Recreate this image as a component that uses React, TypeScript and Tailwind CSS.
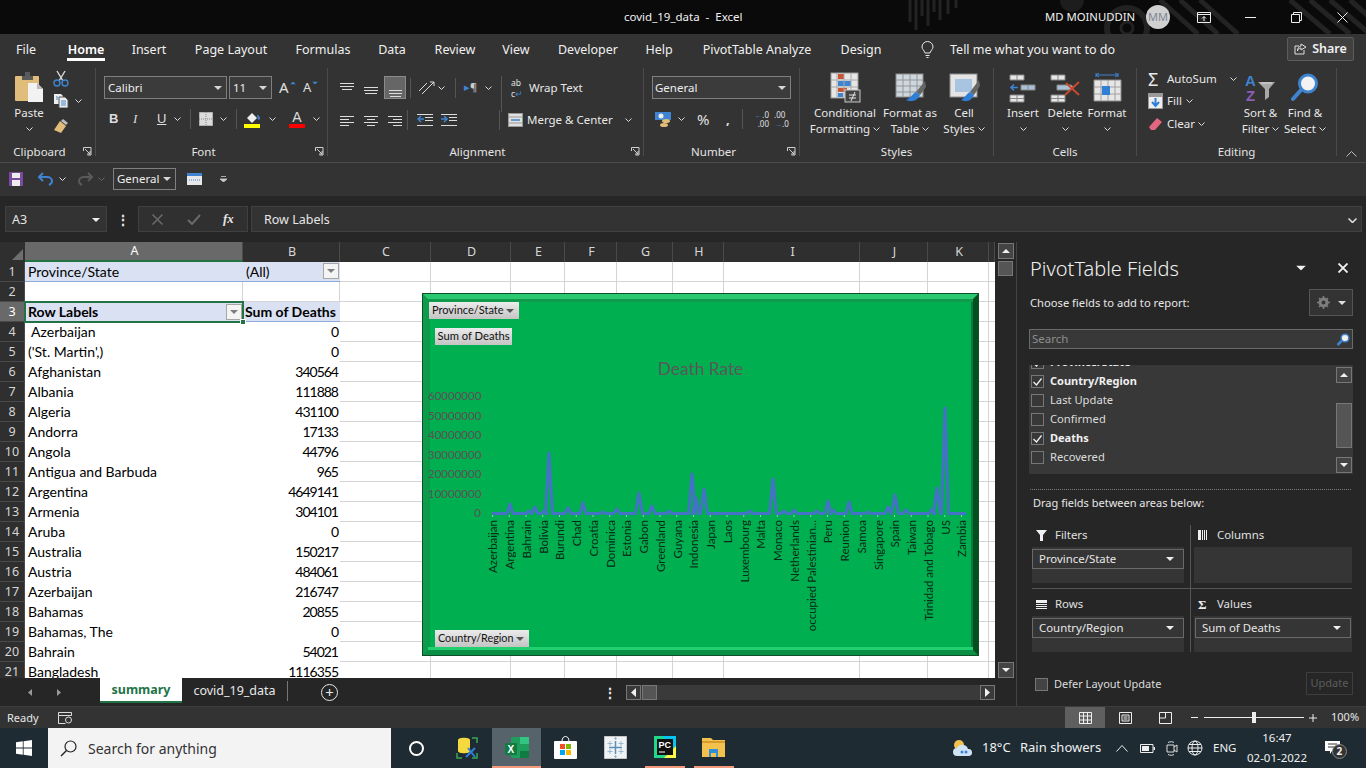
import type { ReactElement, ReactNode } from "react";

type Row = [string, string];

const rows: Row[] = [
  ["\u00a0Azerbaijan", "0"],
  ["('St. Martin',)", "0"],
  ["Afghanistan", "340564"],
  ["Albania", "111888"],
  ["Algeria", "431100"],
  ["Andorra", "17133"],
  ["Angola", "44796"],
  ["Antigua and Barbuda", "965"],
  ["Argentina", "4649141"],
  ["Armenia", "304101"],
  ["Aruba", "0"],
  ["Australia", "150217"],
  ["Austria", "484061"],
  ["Azerbaijan", "216747"],
  ["Bahamas", "20855"],
  ["Bahamas, The", "0"],
  ["Bahrain", "54021"],
  ["Bangladesh", "1116355"],
];

const countries = [
  "Azerbaijan", "Argentina", "Bahrain", "Bolivia", "Burundi", "Chad", "Croatia", "Dominica", "Estonia", "Gabon",
  "Greenland", "Guyana", "Indonesia", "Japan", "Laos", "Luxembourg", "Malta", "Monaco", "Netherlands",
  "occupied Palestinian...", "Peru", "Reunion", "Samoa", "Singapore", "Spain", "Taiwan", "Trinidad and Tobago", "US", "Zambia",
];

const axis = ["60000000", "50000000", "40000000", "30000000", "20000000", "10000000", "0"];

const peaks: [number, number][] = [
  [509, 503], [528, 510], [534, 506], [543, 510], [548, 452], [567, 507], [582, 502], [602, 511], [616, 508],
  [638, 492], [651, 505], [668, 510], [691, 473], [695, 497], [703, 488], [749, 510], [772, 478], [783, 510],
  [793, 509], [816, 510], [827, 500], [832, 509], [848, 501], [867, 511], [887, 506], [894, 494], [905, 509],
  [931, 508], [936, 487], [944, 407],
];

const base = 512.5;
const linePoints = [
  `491,${base}`,
  ...peaks.map(([x, y]) => {
    const half = y < 500 ? 3.5 : 3;
    return `${x - half},${base} ${x},${y} ${x + half},${base}`;
  }),
  `965,${base}`,
].join(" ");

function Chev({ className = "" }: { className?: string }): ReactElement {
  return (
    <svg width="7" height="4" viewBox="0 0 7 4" className={`shrink-0 ${className}`}>
      <path d="M.5.5l3 3 3-3" fill="none" stroke="#dcdcdc" />
    </svg>
  );
}

function Caret({ className = "", color = "#d6d6d6" }: { className?: string; color?: string }): ReactElement {
  return (
    <svg width="8" height="4" viewBox="0 0 8 4" className={`shrink-0 ${className}`}>
      <path d="M0 0h8L4 4z" fill={color} />
    </svg>
  );
}

function Launcher(): ReactElement {
  return (
    <svg width="9" height="9" viewBox="0 0 9 9" className="absolute bottom-[0px] right-[3px]">
      <path d="M.5 4V.5h7.500V8H4.500M2 2l5 5M7 4v3H4" fill="none" stroke="#cfcfcf" />
    </svg>
  );
}

function Group({ label, width, launcher, children }: { label: string; width: string; launcher?: boolean; children: ReactNode }): ReactElement {
  return (
    <div className={`flex h-[88px] shrink-0 flex-col border-r border-[#4b4b4b] ${width}`}>
      <div className="h-[78px]">{children}</div>
      <div className={`relative h-[10px] text-center text-[11.500px] leading-[16px] text-[#e4e4e4] ${launcher ? "pr-[16px]" : ""}`}>
        <div className="-mt-[2px]">{label}</div>
        {launcher ? <Launcher /> : null}
      </div>
    </div>
  );
}

function Big({ width, icon, one, two }: { width: string; icon: ReactNode; one: string; two?: string }): ReactElement {
  return (
    <div className={`flex shrink-0 flex-col items-center text-[11.500px] leading-[16px] text-[#e8e8e8] ${width}`}>
      <div className="flex h-[33px] items-center">{icon}</div>
      <div className="mt-[1px] whitespace-nowrap">{one}</div>
      <div className="flex h-[16px] items-center gap-[3px] whitespace-nowrap">
        {two}
        <Chev />
      </div>
    </div>
  );
}

function IconConditional(): ReactElement {
  return (
    <svg width="31" height="31" viewBox="0 0 31 31">
      <rect x="1" y="1" width="27" height="25" fill="#e6e6e6" stroke="#9a9a9a" />
      <rect x="8" y="2" width="6" height="5" fill="#c8552f" />
      <rect x="8" y="9" width="13" height="5" fill="#3f84d1" />
      <rect x="8" y="16" width="9" height="4" fill="#c8552f" />
      <rect x="8" y="21" width="5" height="4" fill="#3f84d1" />
      <path d="M7 1v25M14 1v25M21 1v25M1 8h27M1 15h27" stroke="#a8a8a8" />
      <rect x="15" y="18" width="15" height="12" fill="#444" stroke="#c8c8c8" />
      <path d="M19 23h7M19 26h7M25 20l-4 9" stroke="#e8e8e8" fill="none" />
    </svg>
  );
}

function IconFormatTable(): ReactElement {
  return (
    <svg width="31" height="31" viewBox="0 0 31 31">
      <rect x="1" y="2" width="27" height="23" fill="#cfd6dc" stroke="#8c8c8c" />
      <path d="M1 8h27M1 14h27M1 20h27M8 2v23M15 2v23M22 2v23" stroke="#8f979d" />
      <path d="M30 9l-9 11 4 3 6-8z" fill="#666" />
      <path d="M21 20c-4 2-5 6-10 8 4 2 11 2 14-5z" fill="#2f7fd6" />
    </svg>
  );
}

function IconCellStyles(): ReactElement {
  return (
    <svg width="31" height="31" viewBox="0 0 31 31">
      <rect x="1" y="2" width="27" height="23" fill="#e4e4e4" stroke="#8c8c8c" />
      <rect x="6" y="7" width="17" height="13" fill="#a9c4e0" />
      <path d="M30 8l-9 12 4 3 6-9z" fill="#666" />
      <path d="M21 20c-4 2-5 6-9 8 4 2 10 2 13-5z" fill="#2f7fd6" />
    </svg>
  );
}

function IconInsert(): ReactElement {
  return (
    <svg width="28" height="30" viewBox="0 0 28 30">
      <path d="M1 2h14v5H1zM1 22h14v7H1z" fill="#e6e6e6" stroke="#888" />
      <path d="M8 2v5M8 22v7M1 25.500h14" stroke="#888" />
      <path d="M12 12h14v5H12z" fill="#a9c0d8" stroke="#888" />
      <path d="M19 12v5" stroke="#888" />
      <path d="M9 14.500H2m3-3-3 3 3 3" stroke="#3f84d1" strokeWidth="1.600" fill="none" />
    </svg>
  );
}

function IconDelete(): ReactElement {
  return (
    <svg width="31" height="30" viewBox="0 0 31 30">
      <path d="M1 2h14v5H1zM1 22h14v7H1z" fill="#e6e6e6" stroke="#888" />
      <path d="M8 2v5M8 22v7M1 25.500h14" stroke="#888" />
      <path d="M7 12h14l3 2.500-3 2.500H7z" fill="#a9c0d8" stroke="#888" />
      <path d="M15 22L29 9M16 10l13 12" stroke="#c8492b" strokeWidth="2" />
    </svg>
  );
}

function IconFormat(): ReactElement {
  return (
    <svg width="30" height="32" viewBox="0 0 30 32">
      <path d="M4 3h22M4 1v4M26 1v4M7 1L4 3l3 2M23 1l3 2-3 2" stroke="#3f84d1" fill="none" />
      <path d="M2 8h27v21H2z" fill="#e6e6e6" stroke="#8c8c8c" />
      <path d="M9 8v21M16 8v21M23 8v21M2 15h27M2 22h27" stroke="#a0a0a0" />
      <rect x="10" y="14" width="8" height="9" fill="#2f7fd6" />
    </svg>
  );
}

function IconSort(): ReactElement {
  return (
    <svg width="31" height="30" viewBox="0 0 31 30">
      <text x="0" y="13" fontSize="15" fontWeight="700" fill="#3f84d1" fontFamily="'Liberation Sans',sans-serif">A</text>
      <text x="1" y="28" fontSize="15" fontWeight="700" fill="#8a5fb5" fontFamily="'Liberation Sans',sans-serif">Z</text>
      <path d="M13 9h17l-6 7v8l-4 3V16z" fill="#a8a8a8" />
      <path d="M16 10h11" stroke="#dcdcdc" />
    </svg>
  );
}

function IconFind(): ReactElement {
  return (
    <svg width="28" height="29" viewBox="0 0 28 29">
      <circle cx="17" cy="10.500" r="8.500" fill="#f3f3f3" stroke="#3f84d1" strokeWidth="3" />
      <path d="M10 17L2 26" stroke="#3f84d1" strokeWidth="4" strokeLinecap="round" />
    </svg>
  );
}

function AlignIcon({ lines }: { lines: string }): ReactElement {
  return (
    <svg width="15" height="11" viewBox="0 0 15 11" className="shrink-0">
      <path d={lines} stroke="#dcdcdc" fill="none" />
    </svg>
  );
}

function Ribbon(): ReactElement {
  return (
    <div className="flex h-[96px] pt-[2px]">
      <Group label="Clipboard" width="w-[96px]" launcher>
        <div className="flex">
          <div className="ml-[10px] flex w-[38px] flex-col items-center text-[11.500px] leading-[16px] text-[#e8e8e8]">
            <svg width="31" height="32" viewBox="0 0 31 32" className="mt-[3px]">
              <rect x="1" y="5" width="24" height="25" fill="#e0bd7a" rx="1" />
              <path d="M8 5h3V1h5v4h3v4H8z" fill="#5a5a5a" />
              <path d="M14 12h9l6 6v13H14z" fill="#f2f2f2" />
              <path d="M23 12v6h6" fill="#bbb" />
            </svg>
            <div className="mt-[2px]">Paste</div>
            <Chev className="mt-[6px]" />
          </div>
          <div className="ml-[5px] flex flex-col">
            <svg width="16" height="17" viewBox="0 0 16 17" className="mt-[2px]">
              <path d="M4 1l6 10M12 1L6 11" stroke="#dcdcdc" strokeWidth="1.400" />
              <circle cx="4" cy="13" r="3" fill="none" stroke="#3f84d1" strokeWidth="1.400" />
              <circle cx="12" cy="13" r="3" fill="none" stroke="#3f84d1" strokeWidth="1.400" />
            </svg>
            <div className="mt-[6px] flex items-center gap-[6px]">
              <svg width="16" height="15" viewBox="0 0 16 15">
                <path d="M1 1h7l2 2v8H1z" fill="#eee" />
                <path d="M6 4h6l3 3v8H6z" fill="#eee" stroke="#555" />
                <path d="M8 8h5M8 10h5M8 12h5M3 4h2M3 6h2" stroke="#3f84d1" />
              </svg>
              <Chev />
            </div>
            <svg width="17" height="15" viewBox="0 0 17 15" className="mt-[10px]">
              <path d="M10 1l5 4-2 2-5-4z" fill="#bdbdbd" />
              <path d="M7 3l6 5-5 7-7-3z" fill="#e0bd7a" />
            </svg>
          </div>
        </div>
      </Group>

      <Group label="Font" width="w-[232px]" launcher>
        <div className="flex pl-[8px] pt-[8px]">
          <div className="flex h-[23px] w-[123px] items-center justify-between border border-[#7f7f7f] bg-[#3b3b3b] pl-[3px] pr-[4px] text-[11.500px] text-[#eee]">
            Calibri
            <Caret />
          </div>
          <div className="ml-[2px] flex h-[23px] w-[43px] items-center justify-between border border-[#7f7f7f] bg-[#3b3b3b] pl-[3px] pr-[4px] text-[11.500px] text-[#eee]">
            11
            <Caret />
          </div>
          <div className="ml-[7px] flex h-[23px] w-[24px] items-center text-[15px] text-[#e0e0e0]">
            A<Caret className="mb-[10px] scale-75 rotate-180" color="#3f84d1" />
          </div>
          <div className="flex h-[23px] w-[24px] items-center text-[13px] text-[#e0e0e0]">
            A<Caret className="mb-[10px] scale-75" color="#3f84d1" />
          </div>
        </div>
        <div className="mt-[9px] flex h-[22px] items-center pl-[13px] text-[13px] text-[#dcdcdc]">
          <span className="w-[24px] font-['Liberation_Sans'] font-bold">B</span>
          <span className="w-[24px] font-['Liberation_Serif'] italic">I</span>
          <span className="w-[15px] font-['Liberation_Sans'] underline">U</span>
          <Chev className="ml-[2px]" />
          <div className="ml-[9px] mr-[8px] h-[20px] w-px bg-[#555]" />
          <svg width="14" height="14" viewBox="0 0 14 14">
            <rect x=".5" y=".5" width="13" height="13" fill="#dcdcdc" stroke="#dcdcdc" strokeDasharray="1 1" />
            <path d="M7 0v14M0 7h14" stroke="#888" strokeDasharray="1 1" />
          </svg>
          <Chev className="ml-[7px]" />
          <div className="ml-[9px] mr-[7px] h-[20px] w-px bg-[#555]" />
          <svg width="17" height="17" viewBox="0 0 17 17">
            <path d="M3 7l5-5 5 5-5 5z" fill="#eee" />
            <path d="M13 4c2 0 3 2 3 4l-2 1z" fill="#3f84d1" />
            <rect y="13" width="16" height="4" fill="#ffff00" />
          </svg>
          <Chev className="ml-[8px]" />
          <div className="ml-[13px] flex h-[17px] w-[16px] flex-col items-center">
            <span className="h-[13px] font-['Liberation_Sans'] text-[14px] leading-[13px] text-[#dcdcdc]">A</span>
            <span className="h-[4px] w-[16px] bg-[#ff0000]" />
          </div>
          <Chev className="ml-[8px]" />
        </div>
      </Group>

      <Group label="Alignment" width="w-[316px]" launcher>
        <div className="mt-[8px] flex h-[23px] items-center pl-[12px]">
          <AlignIcon lines="M0 1.500h14M0 4.500h14M2 7.500h10" />
          <div className="ml-[9px] mt-[5px]">
            <AlignIcon lines="M0 2.500h14M0 5.500h14M1 8.500h12" />
          </div>
          <div className="ml-[5px] flex h-[23px] w-[22px] items-end justify-center border border-[#8a8a8a] bg-[#666] pb-[1px]">
            <AlignIcon lines="M1 4.500h13M1 7.500h13M2 10.500h11" />
          </div>
          <div className="ml-[4px] mr-[7px] h-[20px] w-px bg-[#555]" />
          <svg width="17" height="15" viewBox="0 0 17 15">
            <path d="M1 11L9 3M4 14l9-9M12 2h4v4M16 2l-6 6" stroke="#dcdcdc" fill="none" />
          </svg>
          <Chev className="ml-[3px]" />
          <div className="ml-[10px] mr-[8px] h-[20px] w-px bg-[#555]" />
          <span className="w-[13px] whitespace-nowrap text-[11px] text-[#ccc]">
            <span className="text-[#3f84d1]">▸</span>¶
          </span>
          <Chev className="ml-[8px]" />
          <div className="ml-[9px] mr-[9px] h-[36px] w-px self-start bg-[#555]" />
          <span className="w-[14px] whitespace-nowrap text-[8.500px] leading-[11px] text-[#e4e4e4]">
            ab
            <br />c<span className="text-[#3f84d1]">↵</span>
          </span>
          <span className="ml-[4px] text-[11.500px] text-[#e8e8e8]">Wrap Text</span>
        </div>
        <div className="mt-[10px] flex h-[22px] items-center pl-[12px]">
          <AlignIcon lines="M0 1.500h14M0 4.500h9M0 7.500h14M0 10.500h9" />
          <div className="ml-[9px]">
            <AlignIcon lines="M0 1.500h14M3 4.500h8M0 7.500h14M3 10.500h8" />
          </div>
          <div className="ml-[9px]">
            <AlignIcon lines="M0 1.500h14M5 4.500h9M0 7.500h14M5 10.500h9" />
          </div>
          <div className="ml-[4px] mr-[9px] h-[20px] w-px bg-[#555]" />
          <svg width="16" height="12" viewBox="0 0 16 12">
            <path d="M0 .5h16M8 3.500h8M8 6.500h8M0 11.500h16" stroke="#dcdcdc" />
            <path d="M7 5H1m3-3L1 5l3 3" stroke="#3f84d1" strokeWidth="1.500" fill="none" />
          </svg>
          <svg width="16" height="12" viewBox="0 0 16 12" className="ml-[8px]">
            <path d="M0 .5h16M8 3.500h8M8 6.500h8M0 11.500h16" stroke="#dcdcdc" />
            <path d="M0 5h6M3 2l3 3-3 3" stroke="#3f84d1" strokeWidth="1.500" fill="none" />
          </svg>
          <div className="ml-[42px] mr-[8px] h-[20px] w-px bg-[#555]" />
          <svg width="15" height="14" viewBox="0 0 15 14">
            <rect x=".5" y=".5" width="14" height="13" fill="#e0e0e0" stroke="#999" />
            <path d="M0 4h15M0 10h15" stroke="#999" />
            <path d="M3 7h9" stroke="#3f84d1" strokeWidth="1.500" />
          </svg>
          <span className="ml-[4px] text-[11.500px] text-[#e8e8e8]">Merge &amp; Center</span>
          <Chev className="ml-[12px]" />
        </div>
      </Group>

      <Group label="Number" width="w-[156px]" launcher>
        <div className="ml-[8px] mt-[8px] flex h-[23px] w-[139px] items-center justify-between border border-[#7f7f7f] bg-[#3b3b3b] pl-[2px] pr-[4px] text-[11.500px] text-[#eee]">
          General
          <Caret />
        </div>
        <div className="mt-[9px] flex h-[22px] items-center pl-[11px] text-[#e0e0e0]">
          <svg width="17" height="17" viewBox="0 0 17 17">
            <rect y="1" width="16" height="8" fill="#3f84d1" />
            <circle cx="6" cy="5" r="2.500" fill="#eee" />
            <ellipse cx="11" cy="10" rx="4" ry="2" fill="#e0bd7a" />
            <ellipse cx="9" cy="14" rx="4" ry="2" fill="#e0bd7a" />
          </svg>
          <Chev className="ml-[6px]" />
          <span className="ml-[12px] w-[20px] text-[15px]">%</span>
          <span className="ml-[9px] w-[16px] text-[13px] font-bold leading-[10px]">,</span>
          <div className="mr-[7px] h-[20px] w-px bg-[#555]" />
          <span className="w-[19px] whitespace-nowrap text-right text-[8px] leading-[9px]">
            <span className="text-[#3f84d1]">←</span>.0
            <br />.00
          </span>
          <span className="ml-[5px] w-[19px] whitespace-nowrap text-[8px] leading-[9px]">
            .00
            <br />
            <span className="text-[#3f84d1]">→</span>.0
          </span>
        </div>
      </Group>

      <Group label="Styles" width="w-[194px]">
        <div className="flex pl-[12px] pt-[3px]">
          <Big width="w-[66px]" icon={<IconConditional />} one="Conditional" two="Formatting" />
          <Big width="w-[64px]" icon={<IconFormatTable />} one="Format as" two="Table" />
          <Big width="w-[44px]" icon={<IconCellStyles />} one="Cell" two="Styles" />
        </div>
      </Group>

      <Group label="Cells" width="w-[143px]">
        <div className="flex pl-[8px] pt-[3px]">
          <Big width="w-[42px]" icon={<IconInsert />} one="Insert" />
          <Big width="w-[42px]" icon={<IconDelete />} one="Delete" />
          <Big width="w-[42px]" icon={<IconFormat />} one="Format" />
        </div>
      </Group>

      <Group label="Editing" width="w-[200px]">
        <div className="flex">
          <div className="ml-[11px] flex w-[90px] flex-col text-[11.500px] text-[#e8e8e8]">
            <div className="flex h-[22px] items-center">
              <span className="w-[19px] text-[18px] leading-[18px]">Σ</span>
              {"AutoSum"}
              <Chev className="ml-[13px]" />
            </div>
            <div className="flex h-[22px] items-center">
              <svg width="15" height="16" viewBox="0 0 15 16" className="mr-[4px]">
                <rect width="15" height="16" fill="#9a9a9a" />
                <rect x="1" y="4" width="13" height="11" fill="#eee" />
                <path d="M7.500 5v8M4 9l3.500 4L11 9" stroke="#2f7fd6" strokeWidth="2" fill="none" />
              </svg>
              Fill
              <Chev className="ml-[4px]" />
            </div>
            <div className="flex h-[24px] items-center">
              <svg width="15" height="14" viewBox="0 0 15 14" className="mr-[4px]">
                <path d="M9 1l5 4-7 8H3l-2-3z" fill="#e0677f" />
              </svg>
              Clear
              <Chev className="ml-[3px]" />
            </div>
          </div>
          <div className="flex pt-[3px]">
            <Big width="w-[45px]" icon={<IconSort />} one="Sort &" two="Filter" />
            <Big width="w-[44px]" icon={<IconFind />} one="Find &" two="Select" />
          </div>
        </div>
      </Group>

      <div className="flex flex-1 items-end justify-center pb-[5px]">
        <svg width="11" height="6" viewBox="0 0 11 6">
          <path d="M.5 5.500l5-5 5 5" stroke="#bbb" fill="none" />
        </svg>
      </div>
    </div>
  );
}

function Header(): ReactElement {
  return (
    <div className="relative flex h-[34px] items-center bg-[#0a0a0a] text-[11.500px] text-[#f2f2f2]">
      <svg width="458" height="34" viewBox="908 0 458 34" className="absolute right-0 top-0">
        <path d="M910 0v22M916 0v30M922 0v16M928 0v26M934 0v12M940 0v20M948 0v14M956 0v8" stroke="#232323" strokeWidth="3" />
        <circle cx="1127" cy="28" r="20" fill="none" stroke="#222" strokeWidth="6" />
        <circle cx="1127" cy="28" r="6" fill="none" stroke="#222" strokeWidth="3" />
        <circle cx="1072" cy="0" r="12" fill="#1d1d1d" />
        <path d="M1160 0l38 34M1180 0l38 34M1200 0l38 34M1290 0l40 34M1310 0l40 34M1330 0l40 34M1350 0l30 26" stroke="#232323" strokeWidth="5" />
      </svg>
      <div className="w-[624px] shrink-0" />
      <div className="relative w-[421px] shrink-0 whitespace-pre">covid_19_data  -  Excel</div>
      <div className="relative w-[101px] shrink-0 text-[11.300px]">MD MOINUDDIN</div>
      <div className="relative flex h-[24px] w-[24px] shrink-0 items-center justify-center rounded-full bg-[#d0d0d0] text-[11px] text-[#7d8794]">
        MM
      </div>
      <svg width="14" height="11" viewBox="0 0 14 11" className="relative ml-[27px]">
        <path d="M.5.5h13v10H.5zM.5 2.500h13M7 9V4.500M5 6.500l2-2 2 2" stroke="#eee" fill="none" />
      </svg>
      <svg width="11" height="1" viewBox="0 0 11 1" className="relative ml-[34px]">
        <path d="M0 .5h11" stroke="#eee" />
      </svg>
      <svg width="11" height="11" viewBox="0 0 11 11" className="relative ml-[35px]">
        <path d="M.5 2.500h8v8h-8zM2.500 2.500v-2h8v8h-2" stroke="#eee" fill="none" />
      </svg>
      <svg width="11" height="11" viewBox="0 0 11 11" className="relative ml-[35px]">
        <path d="M.5.5l10 10M10.500.5l-10 10" stroke="#eee" />
      </svg>
    </div>
  );
}

function Tabs(): ReactElement {
  return (
    <div className="flex h-[32px] pl-[8px] text-[12.500px] leading-[18px] text-[#f0f0f0]">
      <div className="w-[36px] pt-[7px] text-center">File</div>
      <div className="flex w-[84px] justify-center pt-[7px]">
        <span className="h-[20px] w-[38px] border-b-[3px] border-white text-center font-semibold text-white">Home</span>
      </div>
      <div className="w-[42px] pt-[7px] text-center">Insert</div>
      <div className="w-[122px] pt-[7px] text-center">Page Layout</div>
      <div className="w-[62px] pt-[7px] text-center">Formulas</div>
      <div className="w-[76px] pt-[7px] text-center">Data</div>
      <div className="w-[50px] pt-[7px] text-center">Review</div>
      <div className="w-[72px] pt-[7px] text-center">View</div>
      <div className="w-[72px] pt-[7px] text-center">Developer</div>
      <div className="w-[70px] pt-[7px] text-center">Help</div>
      <div className="w-[126px] pt-[7px] text-center">PivotTable Analyze</div>
      <div className="w-[82px] pt-[7px] text-center">Design</div>
      <svg width="13" height="17" viewBox="0 0 13 17" className="ml-[19px] mt-[7px]">
        <path d="M4 12C3 9 1 8 1 6a5.500 5.500 0 0111 0c0 2-2 3-3 6zM4.500 14.500h4M5.500 16.500h2" fill="none" stroke="#e8e8e8" />
      </svg>
      <div className="ml-[16px] w-[337px] pt-[7px]">Tell me what you want to do</div>
      <div className="mt-[3px] flex h-[24px] w-[67px] items-center justify-center gap-[5px] rounded-[2px] border border-[#5c5c5c] bg-[#404040] font-semibold">
        <svg width="13" height="12" viewBox="0 0 13 12">
          <path d="M5 3H1v8h9V7M7 1l5 3-5 3V5C5 5 4 6 3.500 8 3.500 5 5 3 7 3z" fill="none" stroke="#e0e0e0" />
        </svg>
        Share
      </div>
    </div>
  );
}

function QuickAccess(): ReactElement {
  return (
    <div className="flex h-[34px] items-center border-t border-[#4b4b4b] pb-[2px] pl-[9px] text-[11.500px] text-[#eee]">
      <svg width="14" height="14" viewBox="0 0 14 14">
        <rect width="14" height="14" fill="#7a4ba0" />
        <rect x="3" y="1" width="8" height="5" fill="#eee" />
        <rect x="3" y="8" width="8" height="6" fill="#eee" />
      </svg>
      <svg width="16" height="14" viewBox="0 0 16 14" className="ml-[15px]">
        <path d="M5 1L1 5l4 4M1 5h8c3 0 5 2 5 4s-1 3-3 4" fill="none" stroke="#3f84d1" strokeWidth="2" />
      </svg>
      <Chev className="ml-[5px]" />
      <svg width="16" height="14" viewBox="0 0 16 14" className="ml-[11px]">
        <path d="M11 1l4 4-4 4M15 5H7C4 5 2 7 2 9s1 3 3 4" fill="none" stroke="#5a5a5a" strokeWidth="2" />
      </svg>
      <svg width="7" height="4" viewBox="0 0 7 4" className="ml-[5px]">
        <path d="M.5.5l3 3 3-3" fill="none" stroke="#666" />
      </svg>
      <div className="ml-[8px] flex h-[22px] w-[63px] items-center justify-between border border-[#7f7f7f] pl-[3px] pr-[4px]">
        General
        <Caret />
      </div>
      <svg width="15" height="12" viewBox="0 0 15 12" className="ml-[11px]">
        <rect width="15" height="12" fill="#e8e8e8" />
        <rect width="15" height="3" fill="#3f84d1" />
        <path d="M2 7h11" stroke="#3f84d1" strokeDasharray="1 1" />
      </svg>
      <svg width="7" height="6" viewBox="0 0 7 6" className="ml-[18px]">
        <path d="M1 .5h5M0 3h7L3.500 6z" stroke="#ccc" fill="#ccc" strokeWidth=".8" />
      </svg>
    </div>
  );
}

function FormulaBar(): ReactElement {
  return (
    <div className="flex h-[46px] items-start bg-[#262626] pl-[5px] pt-[10px] text-[#e6e6e6]">
      <div className="flex h-[26px] w-[102px] items-center justify-between border border-[#404040] bg-[#333] px-[6px] pt-[2px] text-[12.500px]">
        A3
        <Caret color="#eee" />
      </div>
      <div className="flex h-[26px] w-[31px] items-center justify-center text-[14px] font-bold">⋮</div>
      <div className="flex h-[26px] w-[110px] items-center border border-[#404040] bg-[#303030]">
        <svg width="11" height="11" viewBox="0 0 11 11" className="ml-[13px]">
          <path d="M.5.5l10 10M10.500.5l-10 10" stroke="#6a6a6a" strokeWidth="1.500" />
        </svg>
        <svg width="14" height="11" viewBox="0 0 14 11" className="ml-[24px]">
          <path d="M1 6l4 4 8-9" fill="none" stroke="#6a6a6a" strokeWidth="2" />
        </svg>
        <span className="ml-[22px] font-['Liberation_Serif'] text-[13px] font-bold italic">fx</span>
      </div>
      <div className="ml-[3px] flex h-[26px] w-[1111px] items-center justify-between border border-[#404040] bg-[#333] pl-[12px] pr-[4px] pt-[2px] text-[12.500px]">
        Row Labels
        <svg width="9" height="5" viewBox="0 0 9 5">
          <path d="M.5.5l4 4 4-4" fill="none" stroke="#e0e0e0" strokeWidth="1.500" />
        </svg>
      </div>
    </div>
  );
}

function FilterBtn(): ReactElement {
  return (
    <div className="flex h-[16px] w-[16px] shrink-0 items-center justify-center border border-[#a6a6a6] bg-[#f4f4f4]">
      <Caret color="#7f7f7f" />
    </div>
  );
}

function ColHead({ w, children, active }: { w: string; children?: string; active?: boolean }): ReactElement {
  return (
    <div
      className={`flex h-[20px] shrink-0 items-center justify-center border-r border-[#4a4a4a] pl-[2px] text-[12.500px] ${w} ${
        active ? "border-b-2 border-b-[#217346] bg-[#696969] text-white" : "bg-[#2f2f2f] text-[#d6d6d6]"
      }`}
    >
      {children}
    </div>
  );
}

function Cells({ a, b, n }: { a: ReactNode; b: ReactNode; n: number }): ReactElement {
  const active = n === 3;
  return (
    <div className="flex h-[20px] font-['Lato',sans-serif] text-[14px] leading-[19px] text-black">
      <div
        className={`flex w-[25px] shrink-0 items-center justify-center border-b border-r border-[#4a4a4a] font-['Noto_Sans',sans-serif] text-[12.500px] ${
          active ? "bg-[#696969] text-white" : "bg-[#2f2f2f] text-[#d6d6d6]"
        }`}
      >
        {n}
      </div>
      {a}
      {b}
      <div className="w-[91px] shrink-0 border-b border-r border-[#d4d4d4]" />
      <div className="w-[80px] shrink-0 border-b border-r border-[#d4d4d4]" />
      <div className="w-[54px] shrink-0 border-b border-r border-[#d4d4d4]" />
      <div className="w-[52px] shrink-0 border-b border-r border-[#d4d4d4]" />
      <div className="w-[56px] shrink-0 border-b border-r border-[#d4d4d4]" />
      <div className="w-[51px] shrink-0 border-b border-r border-[#d4d4d4]" />
      <div className="w-[136px] shrink-0 border-b border-r border-[#d4d4d4]" />
      <div className="w-[68px] shrink-0 border-b border-r border-[#d4d4d4]" />
      <div className="w-[61px] shrink-0 border-b border-r border-[#d4d4d4]" />
      <div className="flex-1 border-b border-[#d4d4d4]" />
    </div>
  );
}

function Chart(): ReactElement {
  return (
    <div className="absolute left-[422px] top-[31px] h-[363px] w-[557px] border border-[#0e4f2a] font-['Lato',sans-serif] leading-normal">
      <div className="flex h-full flex-col border-[5px] border-b-[#0a8f45] border-l-[#0d9c4b] border-r-[#02501f] border-t-[#2ac870] bg-[#00b050] shadow-[inset_0_3px_0_#109a4c,inset_0_-3px_0_#22d070,inset_2px_0_0_#0b9a48,inset_-2px_0_0_#067a38]">
        <div className="ml-[1px] mt-[3px] flex h-[17px] w-[90px] items-center justify-between bg-gradient-to-b from-[#ececec] to-[#c4c4c4] pl-[3px] pr-[5px] text-[11px] text-[#111]">
          Province/State
          <Caret color="#555" />
        </div>
        <div className="ml-[7px] mt-[9px] flex h-[17px] w-[77px] items-center justify-center bg-gradient-to-b from-[#ececec] to-[#c4c4c4] text-[11.200px] text-[#111]">
          Sum of Deaths
        </div>
        <div className="mt-[14px] h-[20px] text-center text-[17.300px] leading-[20px] text-[#595959]">Death Rate</div>
        <div className="mt-[7px] flex h-[135px]">
          <div className="w-[57px] shrink-0 text-right text-[11.500px] leading-[19.500px] text-[#5f4f55]">
            {axis.map((label) => (
              <div key={label} className="h-[19.500px] pr-[4px]">
                {label}
              </div>
            ))}
          </div>
          <svg width="488" height="135" viewBox="484 385 488 135">
            <path d={`M491 ${base + 2.5}H965`} stroke="#ffffff" strokeDasharray="1 15.750" />
            <polyline points={linePoints} fill="none" stroke="#4472c4" strokeWidth="3" strokeLinejoin="round" />
          </svg>
        </div>
        <div className="-mt-[1px] ml-[57px] flex h-[104px]">
          {countries.map((name) => (
            <div key={name} className="flex w-[16.750px] shrink-0 justify-center">
              <span className="h-fit rotate-180 whitespace-nowrap text-[11.500px] leading-[14px] text-[#0b2a17] [writing-mode:vertical-rl]">
                {name}
              </span>
            </div>
          ))}
        </div>
        <div className="mb-[3px] ml-[7px] mt-auto flex h-[17px] w-[94px] items-center justify-between bg-gradient-to-b from-[#ececec] to-[#c4c4c4] pl-[3px] pr-[5px] text-[10.800px] text-[#111]">
          Country/Region
          <Caret color="#555" />
        </div>
      </div>
    </div>
  );
}

function ScrollBtn({ up }: { up?: boolean }): ReactElement {
  return (
    <div className="flex h-[16px] w-[16px] shrink-0 items-center justify-center border border-[#777] bg-[#444]">
      <Caret color="#f0f0f0" className={up ? "rotate-180" : ""} />
    </div>
  );
}

function Sheet(): ReactElement {
  return (
    <div className="flex h-[436px]">
      <div className="flex w-[995px] shrink-0 flex-col">
        <div className="flex">
          <div className="flex h-[20px] w-[25px] shrink-0 items-end justify-end bg-[#2f2f2f] pb-[2px] pr-[2px]">
            <svg width="11" height="11" viewBox="0 0 11 11">
              <path d="M11 0v11H0z" fill="#6e6e6e" />
            </svg>
          </div>
          <ColHead w="w-[218px]" active>A</ColHead>
          <ColHead w="w-[97px]">B</ColHead>
          <ColHead w="w-[91px]">C</ColHead>
          <ColHead w="w-[80px]">D</ColHead>
          <ColHead w="w-[54px]">E</ColHead>
          <ColHead w="w-[52px]">F</ColHead>
          <ColHead w="w-[56px]">G</ColHead>
          <ColHead w="w-[51px]">H</ColHead>
          <ColHead w="w-[136px]">I</ColHead>
          <ColHead w="w-[68px]">J</ColHead>
          <ColHead w="w-[61px]">K</ColHead>
          <ColHead w="flex-1" />
        </div>
        <div className="relative h-[416px] overflow-hidden bg-white">
          <Cells
            n={1}
            a={<div className="w-[218px] shrink-0 border-b border-[#8ea9db] bg-[#d9e1f2] pl-[3px]">Province/State</div>}
            b={
              <div className="flex w-[97px] shrink-0 items-start justify-between border-b border-[#8ea9db] bg-[#d9e1f2] pl-[3px] pr-[1px] pt-[1px]">
                <span className="-mt-[1px]">(All)</span>
                <FilterBtn />
              </div>
            }
          />
          <Cells
            n={2}
            a={<div className="w-[218px] shrink-0 border-b border-r border-[#d4d4d4]" />}
            b={<div className="w-[97px] shrink-0 border-b border-r border-[#d4d4d4]" />}
          />
          <Cells
            n={3}
            a={
              <div className="relative flex w-[218px] shrink-0 items-center justify-between border-b border-[#8ea9db] bg-[#d9e1f2] pl-[3px] pr-[1px] font-bold">
                Row Labels
                <FilterBtn />
                <div className="absolute -bottom-[2px] -left-[1px] -right-[1px] -top-[1px] border-2 border-[#217346]" />
                <div className="absolute -bottom-[4px] -right-[3px] h-[6px] w-[6px] border border-white bg-[#217346]" />
              </div>
            }
            b={
              <div className="w-[97px] shrink-0 border-b border-[#8ea9db] bg-[#d9e1f2] pl-[2px] font-bold">
                Sum of Deaths
              </div>
            }
          />
          {rows.map(([name, value], index) => (
            <Cells
              key={name + value}
              n={index + 4}
              a={<div className="w-[218px] shrink-0 pl-[3px]">{name}</div>}
              b={<div className="w-[97px] shrink-0 pr-[2px] text-right tracking-[-1px]">{value}</div>}
            />
          ))}
          <Chart />
        </div>
      </div>
      <div className="flex w-[21px] shrink-0 flex-col items-center bg-[#262626] pt-[1px]">
        <ScrollBtn up />
        <div className="mt-[2px] h-[15px] w-[15px] border border-[#777] bg-[#555]" />
        <div className="flex-1" />
        <ScrollBtn />
      </div>
    </div>
  );
}

function HBtn({ left }: { left?: boolean }): ReactElement {
  return (
    <div className="flex h-[15px] w-[15px] shrink-0 items-center justify-center border border-[#777] bg-[#3a3a3a]">
      <svg width="5" height="9" viewBox="0 0 5 9" className={left ? "rotate-180" : ""}>
        <path d="M0 0l5 4.500L0 9z" fill="#f0f0f0" />
      </svg>
    </div>
  );
}

function SheetTabs(): ReactElement {
  return (
    <div className="flex h-[28px] bg-[#262626] text-[12.500px] text-[#e8e8e8]">
      <div className="flex w-[100px] shrink-0 items-center pl-[28px]">
        <svg width="4" height="7" viewBox="0 0 4 7">
          <path d="M4 0v7L0 3.500z" fill="#999" />
        </svg>
        <svg width="4" height="7" viewBox="0 0 4 7" className="ml-[25px]">
          <path d="M0 0v7l4-3.500z" fill="#999" />
        </svg>
      </div>
      <div className="flex h-[25px] w-[82px] shrink-0 items-center justify-center border-b-2 border-[#217346] bg-white pt-[2px] font-bold text-[#217346]">
        summary
      </div>
      <div className="mt-[3px] flex h-[20px] w-[106px] shrink-0 items-center justify-center border-r border-[#777] pt-[1px]">
        covid_19_data
      </div>
      <div className="ml-[33px] flex h-[17px] w-[17px] shrink-0 items-center justify-center self-center rounded-full border border-[#e8e8e8] text-[15px] leading-[14px]">
        +
      </div>
      <div className="ml-[264px] flex w-[16px] shrink-0 items-center justify-center text-[14px] font-bold">⋮</div>
      <div className="ml-[8px] mt-[7px] flex h-[15px] w-[369px] shrink-0 bg-[#3a3a3a]">
        <HBtn left />
        <div className="ml-[1px] h-[15px] w-[15px] border border-[#777] bg-[#555]" />
        <div className="flex-1" />
        <HBtn />
      </div>
    </div>
  );
}

function PaneHead({ icon, label, width }: { icon: ReactNode; label: string; width: string }): ReactElement {
  return (
    <div className={`flex h-[22px] items-center pb-[2px] text-[11.400px] text-[#e0e0e0] ${width}`}>
      <div className="flex w-[20px] shrink-0 justify-start pl-[1px]">{icon}</div>
      {label}
    </div>
  );
}

function Pill({ label }: { label: string }): ReactElement {
  return (
    <div className="flex h-[20px] items-center justify-between border border-[#6a6a6a] pl-[6px] pr-[9px] text-[11.400px] text-[#e8e8e8]">
      {label}
      <Caret color="#eee" />
    </div>
  );
}

function CheckRow({ label, checked }: { label: string; checked?: boolean }): ReactElement {
  return (
    <div className={`flex h-[19px] items-center ${checked ? "text-[11px] font-bold text-[#f0f0f0]" : "text-[11.200px] text-[#dcdcdc]"}`}>
      <div className="flex h-[13px] w-[13px] shrink-0 items-center justify-center border border-[#777]">
        {checked ? (
          <svg width="9" height="8" viewBox="0 0 9 8">
            <path d="M.5 4l3 3 5-6.500" fill="none" stroke="#f0f0f0" strokeWidth="1.300" />
          </svg>
        ) : null}
      </div>
      <span className="ml-[6px]">{label}</span>
    </div>
  );
}

function FieldPane(): ReactElement {
  return (
    <div className="flex h-[464px] w-[350px] shrink-0 flex-col border-l border-[#444] bg-[#262626] pl-[12px] pr-[13px]">
      <div className="ml-[1px] mt-[14px] flex h-[26px] items-start justify-between">
        <span className="text-[20px] font-light leading-[26px] text-[#f0f0f0]">PivotTable Fields</span>
        <div className="mt-[7px] flex items-center gap-[33px] pr-[5px]">
          <Caret color="#f0f0f0" className="scale-125" />
          <svg width="10" height="10" viewBox="0 0 10 10">
            <path d="M.5.5l9 9M9.500.5l-9 9" stroke="#f4f4f4" strokeWidth="1.800" />
          </svg>
        </div>
      </div>
      <div className="ml-[1px] mt-[7px] flex h-[27px] items-center justify-between pt-[1px] text-[11.200px] text-[#e6e6e6]">
        Choose fields to add to report:
        <div className="-mt-[1px] flex h-[27px] w-[44px] items-center justify-center gap-[8px] border border-[#555] bg-[#333]">
          <svg width="13" height="13" viewBox="0 0 13 13">
            <circle cx="6.500" cy="6.500" r="3.500" fill="none" stroke="#7d7d7d" strokeWidth="3" />
            <path d="M6.500 0v13M0 6.500h13M2 2l9 9M11 2l-9 9" stroke="#7d7d7d" strokeWidth="1.500" strokeDasharray="2 9" />
          </svg>
          <Caret color="#ddd" />
        </div>
      </div>
      <div className="mt-[13px] flex h-[20px] w-[324px] items-center justify-between border border-[#6a6a6a] bg-[#383838] px-[2px] text-[11.500px] text-[#8d8d8d]">
        Search
        <svg width="14" height="13" viewBox="0 0 14 13">
          <circle cx="9" cy="5" r="3.800" fill="#f0f0f0" stroke="#3f84d1" strokeWidth="1.500" />
          <path d="M5.500 8L1.500 12" stroke="#3f84d1" strokeWidth="2.500" />
        </svg>
      </div>
      <div className="mt-[16px] flex h-[109px] w-[324px] bg-[#383838]">
        <div className="w-[306px] pl-[2px]">
          <div className="h-[7px] overflow-hidden">
            <div className="-mt-[12px]">
              <CheckRow label="Province/State" checked />
            </div>
          </div>
          <CheckRow label="Country/Region" checked />
          <CheckRow label="Last Update" />
          <CheckRow label="Confirmed" />
          <CheckRow label="Deaths" checked />
          <CheckRow label="Recovered" />
        </div>
        <div className="ml-[1px] flex flex-col pt-[2px]">
          <ScrollBtn up />
          <div className="mt-[20px] h-[45px] w-[16px] border border-[#777] bg-[#555]" />
          <div className="mt-[9px]">
            <ScrollBtn />
          </div>
        </div>
      </div>
      <div className="ml-[1px] mt-[15px] h-px w-[321px] border-t border-dotted border-[#777]" />
      <div className="ml-[4px] mt-[4px] h-[18px] text-[11px] leading-[18px] text-[#e6e6e6]">Drag fields between areas below:</div>
      <div className="ml-[3px] mt-[13px] grid w-[320px] grid-cols-[159px_161px]">
        <div className="border-b border-r border-[#555] pb-[5px] pr-[6px]">
          <PaneHead
            label="Filters"
            width="w-[152px] pl-[3px]"
            icon={
              <svg width="11" height="11" viewBox="0 0 11 11">
                <path d="M0 0h11L7 5v6H4V5z" fill="#f0f0f0" />
              </svg>
            }
          />
          <div className="h-[36px] bg-[#353535] pt-[2px]">
            <Pill label="Province/State" />
          </div>
        </div>
        <div className="border-b border-[#555] pb-[5px] pl-[3px]">
          <PaneHead
            label="Columns"
            width="pl-[3px]"
            icon={
              <svg width="10" height="10" viewBox="0 0 10 10">
                <path d="M0 0h3v10H0zM4 0h1v10H4zM6 0h1v10H6zM8 0h1v10H8z" fill="#eee" />
              </svg>
            }
          />
          <div className="h-[36px] bg-[#353535]" />
        </div>
        <div className="border-r border-[#555] pr-[6px] pt-[5px]">
          <PaneHead
            label="Rows"
            width="pl-[3px]"
            icon={
              <svg width="11" height="9" viewBox="0 0 11 9">
                <path d="M0 0h11v3H0zM0 4h11v1H0zM0 6h11v1H0zM0 8h11v1H0z" fill="#eee" />
              </svg>
            }
          />
          <div className="h-[36px] bg-[#353535] pt-[2px]">
            <Pill label="Country/Region" />
          </div>
        </div>
        <div className="pl-[3px] pt-[5px]">
          <PaneHead
            label="Values"
            width="pl-[3px]"
            icon={<span className="font-['Liberation_Serif'] text-[13px] font-bold leading-[13px] text-[#eee]">Σ</span>}
          />
          <div className="h-[36px] bg-[#353535] px-[1px] pt-[2px]">
            <Pill label="Sum of Deaths" />
          </div>
        </div>
      </div>
      <div className="mt-[20px] flex h-[23px] items-center justify-between pl-[6px] text-[11px] text-[#dcdcdc]">
        <div className="flex items-center pt-[1px]">
          <div className="h-[13px] w-[13px] border border-[#777] bg-[#444]" />
          <span className="ml-[6px]">Defer Layout Update</span>
        </div>
        <div className="flex h-[23px] w-[47px] items-center justify-center border border-[#3d3d3d] text-[#5c5c5c]">Update</div>
      </div>
    </div>
  );
}

function StatusBar(): ReactElement {
  return (
    <div className="flex h-[22px] items-center border-t border-[#3d3d3d] bg-[#333] pl-[7px] text-[11px] text-[#e6e6e6]">
      <span className="w-[51px] pt-[1px]">Ready</span>
      <svg width="15" height="12" viewBox="0 0 15 12">
        <path d="M.5.5h13v3H.5zM.5 3.500v8h7" stroke="#ddd" fill="none" />
        <circle cx="10.500" cy="8" r="3" stroke="#ddd" fill="none" />
      </svg>
      <div className="flex-1" />
      <div className="flex h-[21px] w-[40px] items-center justify-center bg-[#5f5f5f]">
        <svg width="13" height="12" viewBox="0 0 13 12">
          <path d="M.5.5h12v11H.5zM.5 4h12M.5 8h12M4.500.5v11M8.500.5v11" stroke="#f0f0f0" fill="none" />
        </svg>
      </div>
      <div className="flex h-[21px] w-[40px] items-center justify-center">
        <svg width="13" height="12" viewBox="0 0 13 12">
          <path d="M.5.5h12v11H.5zM3 3h7v6H3zM4.500 5h4M4.500 7h4" stroke="#eee" fill="none" />
        </svg>
      </div>
      <div className="flex h-[21px] w-[40px] items-center justify-center">
        <svg width="13" height="12" viewBox="0 0 13 12">
          <path d="M.5.5h12v11H.5zM6.500.5V6H.5" stroke="#eee" fill="none" />
        </svg>
      </div>
      <div className="ml-[6px] h-px w-[7px] bg-[#eee]" />
      <div className="ml-[6px] flex h-[11px] w-[100px] items-center">
        <div className="h-px w-[48px] bg-[#eee]" />
        <div className="h-[11px] w-[4px] bg-[#eee]" />
        <div className="h-px w-[48px] bg-[#eee]" />
      </div>
      <svg width="8" height="8" viewBox="0 0 8 8" className="ml-[5px]">
        <path d="M4 0v8M0 4h8" stroke="#eee" />
      </svg>
      <span className="ml-[14px] w-[35px]">100%</span>
    </div>
  );
}

function Slot({ children, on, active }: { children?: ReactNode; on?: boolean; active?: boolean }): ReactElement {
  return (
    <div className={`flex h-[40px] w-[49.300px] shrink-0 flex-col items-center ${active ? "bg-[#56636b]" : ""}`}>
      <div className="flex h-[38px] items-center justify-center">{children}</div>
      {on ? <div className={`h-[2px] ${active ? "w-full" : "w-[40px]"} bg-[#f49a7c]`} /> : null}
    </div>
  );
}

function Taskbar(): ReactElement {
  return (
    <div className="flex h-[40px] items-center bg-[#1e2b33] text-[#f0f0f0]">
      <div className="flex w-[48px] shrink-0 justify-center">
        <svg width="16" height="16" viewBox="0 0 16 16">
          <path d="M0 2.200l6.800-.9v6.300H0zM7.600 1.200L16 0v7.600H7.600zM0 8.400h6.800v6.300L0 13.800zM7.600 8.400H16V16l-8.400-1.200z" fill="#fff" />
        </svg>
      </div>
      <div className="flex h-[40px] w-[343px] shrink-0 items-center bg-[#f3f3f3] pl-[12px] text-[14px] text-[#333]">
        <svg width="17" height="17" viewBox="0 0 17 17">
          <circle cx="10.500" cy="6.500" r="5.500" fill="none" stroke="#222" strokeWidth="1.200" />
          <path d="M6.500 10.500L1 16" stroke="#222" strokeWidth="1.400" />
        </svg>
        <span className="ml-[11px]">Search for anything</span>
      </div>
      <div className="flex w-[50px] shrink-0 justify-center">
        <div className="h-[15px] w-[15px] rounded-full border-2 border-white" />
      </div>
      <div className="flex w-[51px] shrink-0 justify-center">
        <svg width="22" height="22" viewBox="0 0 22 22">
          <path d="M2 3c0-3 12-3 12 0v11c0 3-12 3-12 0z" fill="#f4d93f" />
          <path d="M16 1h5v5M1 16v5h5M21 16v5h-5" stroke="#3aa757" strokeWidth="1.500" fill="none" />
          <path d="M10 20l9-9M12 11l7 9" stroke="#2f7fd6" strokeWidth="2" />
        </svg>
      </div>
      <Slot on active>
        <svg width="24" height="21" viewBox="0 0 24 21">
          <rect x="6" y="0" width="18" height="21" rx="1" fill="#1f9d5c" />
          <rect x="15" y="0" width="9" height="7" fill="#33c481" />
          <rect x="15" y="14" width="9" height="7" fill="#107c41" />
          <rect x="0" y="6" width="12" height="12" rx="1" fill="#107c41" />
          <text x="2.500" y="15.500" fontSize="10" fontWeight="700" fill="#fff" fontFamily="'Liberation Sans',sans-serif">X</text>
        </svg>
      </Slot>
      <Slot>
        <svg width="23" height="23" viewBox="0 0 23 23">
          <path d="M8 5c0-6 7-6 7 0" fill="none" stroke="#fff" />
          <rect y="5" width="23" height="18" rx="1" fill="#fff" />
          <rect x="6" y="8" width="5" height="5" fill="#f25022" />
          <rect x="12" y="8" width="5" height="5" fill="#7fba00" />
          <rect x="6" y="14" width="5" height="5" fill="#00a4ef" />
          <rect x="12" y="14" width="5" height="5" fill="#ffb900" />
        </svg>
      </Slot>
      <Slot>
        <svg width="23" height="23" viewBox="0 0 23 23">
          <rect width="23" height="23" fill="#f0f3f5" stroke="#999" />
          <path d="M11.500 5v13M5 11.500h13" stroke="#5b8fb5" strokeWidth="1.500" />
          <path d="M6 5v5M3.500 7.500h5M17 5v5M14.500 7.500h5M6 13v5M3.500 15.500h5M17 13v5M14.500 15.500h5M11.500 1v3M10 2.500h3M11.500 19v3M10 20.500h3" stroke="#9db8cc" />
        </svg>
      </Slot>
      <Slot on>
        <svg width="22" height="22" viewBox="0 0 22 22">
          <path d="M0 0h22v22H0z" fill="#21d789" />
          <path d="M8 0h14v14z" fill="#07c3f2" />
          <path d="M22 10v12H10z" fill="#fcf84a" />
          <rect x="3" y="3" width="16" height="16" fill="#111" />
          <text x="4.500" y="12" fontSize="9" fontWeight="700" fill="#fff" fontFamily="'Liberation Sans',sans-serif">PC</text>
          <path d="M5 16h6" stroke="#fff" />
        </svg>
      </Slot>
      <Slot on>
        <svg width="23" height="19" viewBox="0 0 23 19">
          <path d="M0 0h9l2 2h12v17H0z" fill="#f2c14e" />
          <path d="M0 3h23v2H0z" fill="#d89a2b" />
          <path d="M7 11h9v8h-2v-4H9v4H7z" fill="#2f8fd8" />
        </svg>
      </Slot>
      <div className="w-[213.500px] shrink-0" />
      <svg width="21" height="18" viewBox="0 0 21 18" className="shrink-0">
        <circle cx="7" cy="6" r="5" fill="#f2c14e" />
        <path d="M5 17a4 4 0 010-8 6 6 0 0111 1 3.500 3.500 0 011 7z" fill="#cfe3f5" />
        <circle cx="10" cy="13" r="1.500" fill="#3f84d1" />
        <circle cx="14" cy="13" r="1.500" fill="#3f84d1" />
      </svg>
      <span className="ml-[9px] w-[38px] shrink-0 text-[13px]">18°C</span>
      <span className="w-[96px] shrink-0 whitespace-nowrap text-[13px]">Rain showers</span>
      <svg width="12" height="7" viewBox="0 0 12 7" className="shrink-0">
        <path d="M.5 6.500l5.500-6 5.500 6" fill="none" stroke="#eee" />
      </svg>
      <svg width="15" height="9" viewBox="0 0 15 9" className="ml-[12px] shrink-0">
        <path d="M.5.5h12.500v8H.5z" fill="none" stroke="#eee" />
        <rect x="2" y="2" width="7" height="5" fill="#eee" />
        <rect x="13.500" y="3" width="1.500" height="3" fill="#eee" />
      </svg>
      <svg width="12" height="15" viewBox="0 0 12 15" className="ml-[11px] shrink-0">
        <path d="M1 4h7v7H1zM8 6l3-2v7L8 9M2 1.500c2-1 5-1 6 0M2 13.500c2 1 5 1 6 0" fill="none" stroke="#ddd" />
      </svg>
      <svg width="16" height="16" viewBox="0 0 16 16" className="ml-[9px] shrink-0">
        <circle cx="8" cy="8" r="7" fill="none" stroke="#eee" />
        <ellipse cx="8" cy="8" rx="3" ry="7" fill="none" stroke="#eee" />
        <path d="M1 8h14M2 4.500h12M2 11.500h12" stroke="#eee" />
      </svg>
      <span className="ml-[10px] w-[34px] shrink-0 text-[11.500px]">ENG</span>
      <div className="w-[60px] shrink-0 whitespace-nowrap text-center text-[11.500px] leading-[20px]">
        16:47
        <br />
        02-01-2022
      </div>
      <div className="relative ml-[18px] shrink-0">
        <svg width="15" height="14" viewBox="0 0 15 14">
          <path d="M0 0h15v10H7l-2 3v-3H0z" fill="#fff" />
          <path d="M3 3h9M3 6h9" stroke="#333" />
        </svg>
        <div className="absolute -bottom-[4px] left-[7px] flex h-[15px] w-[15px] items-center justify-center rounded-full border border-[#888] bg-[#333] text-[10px] font-bold">
          2
        </div>
      </div>
    </div>
  );
}

export default function App(): ReactElement {
  return (
    <div className="flex h-[768px] w-[1366px] flex-col overflow-hidden bg-[#262626] font-['Noto_Sans',sans-serif]">
      <Header />
      <div className="bg-[#333333]">
        <Tabs />
        <Ribbon />
        <QuickAccess />
      </div>
      <FormulaBar />
      <div className="flex">
        <div className="w-[1016px] shrink-0">
          <Sheet />
          <SheetTabs />
        </div>
        <FieldPane />
      </div>
      <StatusBar />
      <Taskbar />
    </div>
  );
}
